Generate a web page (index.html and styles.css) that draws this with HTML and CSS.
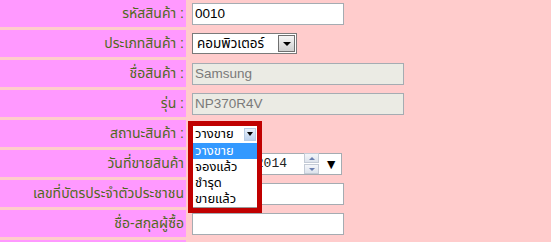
FILE: index.html
```html
<!DOCTYPE html>
<html lang="th">
<head>
  <meta charset="UTF-8" />
  <title>ข้อมูลสินค้า</title>
  <link rel="stylesheet" href="styles.css">
</head>
<body>
  <main class="form">
    <div class="label">รหัสสินค้า :</div>
    <div class="field"><input class="text-box short" type="text" value="0010" /></div>

    <div class="label">ประเภทสินค้า :</div>
    <div class="field">
      <div class="select-box">
        <span class="select-text">คอมพิวเตอร์</span>
        <span class="select-btn"><span class="arrow"></span></span>
      </div>
    </div>

    <div class="label">ชื่อสินค้า :</div>
    <div class="field"><input class="text-box long" type="text" value="Samsung" disabled /></div>

    <div class="label">รุ่น :</div>
    <div class="field"><input class="text-box long" type="text" value="NP370R4V" disabled /></div>

    <div class="label">สถานะสินค้า :</div>
    <div class="field status-field">
      <div class="dropdown-frame">
        <div class="dd-select">
          <span class="dd-text">วางขาย</span>
          <span class="dd-btn"><span class="arrow"></span></span>
        </div>
        <ul class="dd-list">
          <li class="active">วางขาย</li>
          <li>จองแล้ว</li>
          <li>ชำรุด</li>
          <li>ขายแล้ว</li>
        </ul>
      </div>
    </div>

    <div class="label">วันที่ขายสินค้า</div>
    <div class="field">
      <div class="date-box">
        <span class="date-text">01/01/2014</span>
        <span class="spinner">
          <span class="spin-up"></span>
          <span class="spin-down"></span>
        </span>
        <span class="date-drop">▼</span>
      </div>
    </div>

    <div class="label">เลขที่บัตรประจำตัวประชาชน</div>
    <div class="field"><input class="text-box short" type="text" value="" /></div>

    <div class="label">ชื่อ-สกุลผู้ซื้อ</div>
    <div class="field"><input class="text-box short" type="text" value="" /></div>

    <div class="label"></div>
    <div class="field"></div>
  </main>
</body>
</html>
```

FILE: styles.css
```css
html, body {
  margin: 0;
  padding: 0;
  height: 100%;
  overflow: hidden;
  background: #ffcccc;
  font-family: Tahoma, "Liberation Sans", "Noto Sans Thai", sans-serif;
  font-size: 13px;
}

.form {
  display: grid;
  grid-template-columns: 186px 1fr;
  grid-auto-rows: 27px;
  column-gap: 6px;
  row-gap: 3px;
}

.label {
  background: #ff99ff;
  color: #50691c;
  font-size: 14px;
  display: flex;
  align-items: center;
  justify-content: flex-end;
  padding-right: 2px;
  white-space: nowrap;
  overflow: hidden;
}

.field {
  display: flex;
  align-items: center;
}

/* text inputs */
.text-box {
  box-sizing: border-box;
  height: 22px;
  margin: 0;
  padding: 0 2px;
  border: 1px solid #a5acb2;
  background: #fff;
  color: #000;
  font-family: Tahoma, "Liberation Sans", sans-serif;
  font-size: 13.5px;
  outline: none;
}

.text-box.short { width: 152px; }
.text-box.long  { width: 212px; }

.text-box:disabled {
  background: #ebebe4;
  color: #7a7a7a;
  -webkit-text-fill-color: #7a7a7a;
}

/* closed select (ประเภทสินค้า) */
.select-box {
  box-sizing: border-box;
  width: 105px;
  height: 21px;
  display: flex;
  align-items: center;
  background: #fff;
  border: 1px solid #7a7a7a;
  padding: 1px;
}

.select-text {
  flex: 1;
  padding-left: 3px;
  font-size: 13.5px;
  white-space: nowrap;
  overflow: hidden;
}

.select-btn {
  box-sizing: border-box;
  width: 17px;
  height: 17px;
  border: 1px solid #6f6f6f;
  background: linear-gradient(#f6f6f6, #cfcfcf);
  display: flex;
  align-items: center;
  justify-content: center;
}

.arrow {
  width: 0;
  height: 0;
  border-left: 4px solid transparent;
  border-right: 4px solid transparent;
  border-top: 4px solid #000;
}

/* open status dropdown with red marker frame */
.status-field {
  position: relative;
}

.dropdown-frame {
  position: absolute;
  left: -4px;
  top: 1px;
  width: 64px;
  border: 5px solid #c00000;
  background: #fff;
  z-index: 5;
}

.dd-select {
  height: 16px;
  display: flex;
  align-items: center;
  background: #fff;
}

.dd-text {
  flex: 1;
  padding-left: 2px;
  line-height: 16px;
  white-space: nowrap;
}

.dd-btn {
  box-sizing: border-box;
  width: 12px;
  height: 13px;
  margin-right: 1px;
  border: 1px solid #b9cde5;
  background: linear-gradient(#e9f1fb, #bcd2ee);
  display: flex;
  align-items: center;
  justify-content: center;
}

.dd-btn .arrow {
  border-left-width: 3px;
  border-right-width: 3px;
  border-top-width: 4px;
}

.dd-list {
  list-style: none;
  margin: 1px 0 0;
  padding: 0;
  border-bottom: 1px solid #9a9a9a;
}

.dd-list li {
  height: 16px;
  line-height: 16px;
  padding-left: 2px;
  color: #000;
  white-space: nowrap;
}

.dd-list li.active {
  background: #3399ff;
  color: #fff;
}

/* date input */
.date-box {
  box-sizing: border-box;
  width: 150px;
  height: 22px;
  display: flex;
  align-items: center;
  background: #fff;
  border: 1px solid #a5acb2;
}

.date-text {
  flex: 1;
  padding-left: 16px;
  font-family: "Liberation Mono", monospace;
  font-size: 13px;
  color: #222;
  white-space: nowrap;
  overflow: hidden;
}

.spinner {
  display: flex;
  flex-direction: column;
  gap: 1px;
  width: 15px;
  margin-right: 5px;
}

.spinner span {
  height: 8px;
  border: 1px solid #c4cbd6;
  background: linear-gradient(#f4f6fa, #dde3ec);
  display: flex;
  align-items: center;
  justify-content: center;
}

.spinner span::after {
  content: "";
  width: 0;
  height: 0;
  border-left: 3px solid transparent;
  border-right: 3px solid transparent;
}

.spin-up::after { border-bottom: 3px solid #6a7fb0; }
.spin-down::after { border-top: 3px solid #6a7fb0; }

.date-drop {
  font-size: 14px;
  line-height: 1;
  color: #000;
  margin-right: 3px;
}
```
